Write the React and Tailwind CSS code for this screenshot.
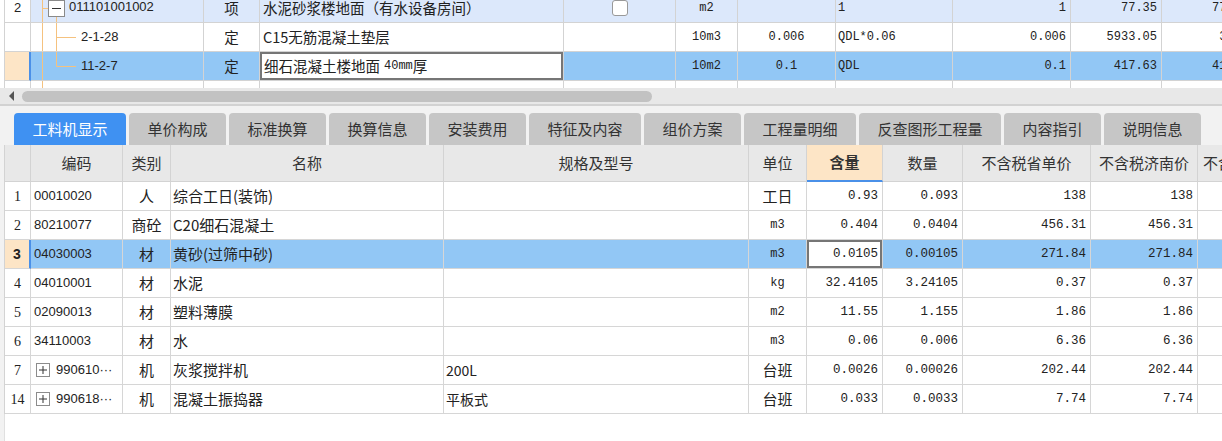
import React from 'react';

const CJK = "font-['Noto_Sans_CJK_SC','Noto_Sans',sans-serif]";
const MONO = "font-['Liberation_Mono','Noto_Sans_CJK_SC',monospace]";
const SANS = "font-['Liberation_Sans','Noto_Sans_CJK_SC',sans-serif]";

const topCols = 'grid-cols-[26px_173px_56px_304px_112px_62px_98px_117px_118px_91px_91px]';
const botCols = 'grid-cols-[26px_92px_48px_273px_305px_58px_76px_80px_128px_107px_107px]';

const Tree = ({ kind }) => {
    const c = '#f5c27f';
    if (kind === 'root') {
        return (
            <svg width="38" height="28" className="shrink-0">
                <line x1="11.5" y1="0" x2="11.5" y2="28" stroke={c} />
                <line x1="11.5" y1="14.5" x2="17" y2="14.5" stroke={c} />
                <line x1="25.5" y1="23" x2="25.5" y2="28" stroke={c} />
                <rect x="17.5" y="6.5" width="16" height="16" fill="#fff" stroke="#8a8a8a" />
                <line x1="21" y1="14.5" x2="30" y2="14.5" stroke="#333" />
            </svg>
        );
    }
    if (kind === 'mid' || kind === 'last') {
        return (
            <svg width="50" height="28" className="shrink-0">
                <line x1="11.5" y1="0" x2="11.5" y2="28" stroke={c} />
                <line x1="25.5" y1="0" x2="25.5" y2={kind === 'mid' ? 28 : 14.5} stroke={c} />
                <line x1="25.5" y1="14.5" x2="45" y2="14.5" stroke={c} />
            </svg>
        );
    }
    return (
        <svg width="50" height="28" className="shrink-0">
            <line x1="11.5" y1="0" x2="11.5" y2="28" stroke={c} />
        </svg>
    );
};

const PlusBox = () => (
    <svg width="14" height="14" className="shrink-0 ml-[2px] mr-[6px]">
        <rect x="0.5" y="0.5" width="13" height="13" fill="#fff" stroke="#8c8c8c" />
        <line x1="3" y1="7" x2="11" y2="7" stroke="#333" />
        <line x1="7" y1="3" x2="7" y2="11" stroke="#333" />
    </svg>
);

const TopTable = () => {
    const cell = 'border-r border-b border-[#d3d3d3] flex items-center h-[29px] overflow-hidden whitespace-nowrap';
    return (
        <div className="h-[88px] overflow-hidden bg-white">
            <div className={`-mt-[6px] ml-[4px] border-l border-[#d3d3d3] text-[#222] ${CJK}`}>
                {/* row 1 */}
                <div className={`grid ${topCols} bg-[#dce8fb]`}>
                    <div className={`${cell} bg-white justify-center text-[13px] ${SANS}`}>2</div>
                    <div className={`${cell} text-[13px] ${SANS}`}><Tree kind="root" /><span className="-mt-[2px]">011101001002</span></div>
                    <div className={`${cell} justify-center text-[14.5px]`}>项</div>
                    <div className={`${cell} pl-[3px] text-[14.5px]`}>水泥砂浆楼地面（有水设备房间）</div>
                    <div className={`${cell} justify-center`}><div className="w-[16px] h-[16px] rounded-[3px] border border-[#999] bg-white" /></div>
                    <div className={`${cell} justify-center text-[12px] ${MONO}`}>m2</div>
                    <div className={`${cell}`} />
                    <div className={`${cell} pl-[2px] text-[12px] ${MONO}`}>1</div>
                    <div className={`${cell} justify-end pr-[4px] text-[12px] ${MONO}`}>1</div>
                    <div className={`${cell} justify-end pr-[4px] text-[12px] ${MONO}`}>77.35</div>
                    <div className={`${cell} justify-end pr-[4px] text-[12px] ${MONO}`}>77.35</div>
                </div>
                {/* row 2 */}
                <div className={`grid ${topCols} bg-white`}>
                    <div className={`${cell}`} />
                    <div className={`${cell} text-[13px] ${SANS}`}><Tree kind="mid" /><span>2-1-28</span></div>
                    <div className={`${cell} justify-center text-[14.5px]`}>定</div>
                    <div className={`${cell} pl-[3px] text-[14.5px]`}>C15无筋混凝土垫层</div>
                    <div className={`${cell}`} />
                    <div className={`${cell} justify-center text-[12px] ${MONO}`}>10m3</div>
                    <div className={`${cell} justify-center text-[12px] ${MONO}`}>0.006</div>
                    <div className={`${cell} pl-[2px] text-[12px] ${MONO}`}>QDL*0.06</div>
                    <div className={`${cell} justify-end pr-[4px] text-[12px] ${MONO}`}>0.006</div>
                    <div className={`${cell} justify-end pr-[4px] text-[12px] ${MONO}`}>5933.05</div>
                    <div className={`${cell} justify-end pr-[4px] text-[12px] ${MONO}`}>35.6</div>
                </div>
                {/* row 3 selected */}
                <div className={`grid ${topCols} bg-[#92c7f5]`}>
                    <div className={`${cell} bg-[#fde5c6] border-r-2 border-r-[#4a90e8]`} />
                    <div className={`${cell} text-[13px] ${SANS}`}><Tree kind="last" /><span>11-2-7</span></div>
                    <div className={`${cell} justify-center text-[14.5px]`}>定</div>
                    <div className={`${cell} p-0`}>
                        <div className="w-full h-full bg-white border-2 border-[#767676] flex items-center pl-[2px] text-[14.5px]">
                            细石混凝土楼地面<span className={`ml-[4px] text-[12px] ${MONO}`}>40mm</span>厚
                        </div>
                    </div>
                    <div className={`${cell}`} />
                    <div className={`${cell} justify-center text-[12px] ${MONO}`}>10m2</div>
                    <div className={`${cell} justify-center text-[12px] ${MONO}`}>0.1</div>
                    <div className={`${cell} pl-[2px] text-[12px] ${MONO}`}>QDL</div>
                    <div className={`${cell} justify-end pr-[4px] text-[12px] ${MONO}`}>0.1</div>
                    <div className={`${cell} justify-end pr-[4px] text-[12px] ${MONO}`}>417.63</div>
                    <div className={`${cell} justify-end pr-[4px] text-[12px] ${MONO}`}>41.76</div>
                </div>
                {/* row 4, partly scrolled out */}
                <div className={`grid ${topCols} bg-white`}>
                    <div className={`${cell}`} />
                    <div className={`${cell} text-[13px] ${SANS}`}><Tree kind="cont" /><span>2-1-30</span></div>
                    <div className={`${cell} justify-center text-[14.5px]`}>定</div>
                    <div className={`${cell} pl-[3px] text-[14.5px]`}>一 混凝土找坡</div>
                    <div className={`${cell}`} />
                    <div className={`${cell}`} />
                    <div className={`${cell}`} />
                    <div className={`${cell}`} />
                    <div className={`${cell}`} />
                    <div className={`${cell}`} />
                    <div className={`${cell}`} />
                </div>
            </div>
        </div>
    );
};

const tabs = [
    ['工料机显示', 'w-[112px]'],
    ['单价构成', 'w-[97px]'],
    ['标准换算', 'w-[97px]'],
    ['换算信息', 'w-[97px]'],
    ['安装费用', 'w-[97px]'],
    ['特征及内容', 'w-[112px]'],
    ['组价方案', 'w-[97px]'],
    ['工程量明细', 'w-[112px]'],
    ['反查图形工程量', 'w-[142px]'],
    ['内容指引', 'w-[97px]'],
    ['说明信息', 'w-[97px]'],
];

const rows = [
    { n: '1', code: '00010020', type: '人', name: '综合工日(装饰)', spec: '', unit: '工日', hl: '0.93', sl: '0.093', p1: '138', p2: '138' },
    { n: '2', code: '80210077', type: '商砼', name: 'C20细石混凝土', spec: '', unit: 'm3', hl: '0.404', sl: '0.0404', p1: '456.31', p2: '456.31' },
    { n: '3', code: '04030003', type: '材', name: '黄砂(过筛中砂)', spec: '', unit: 'm3', hl: '0.0105', sl: '0.00105', p1: '271.84', p2: '271.84', sel: true },
    { n: '4', code: '04010001', type: '材', name: '水泥', spec: '', unit: 'kg', hl: '32.4105', sl: '3.24105', p1: '0.37', p2: '0.37' },
    { n: '5', code: '02090013', type: '材', name: '塑料薄膜', spec: '', unit: 'm2', hl: '11.55', sl: '1.155', p1: '1.86', p2: '1.86' },
    { n: '6', code: '34110003', type: '材', name: '水', spec: '', unit: 'm3', hl: '0.06', sl: '0.006', p1: '6.36', p2: '6.36' },
    { n: '7', code: '990610···', plus: true, type: '机', name: '灰浆搅拌机', spec: '200L', unit: '台班', hl: '0.0026', sl: '0.00026', p1: '202.44', p2: '202.44' },
    { n: '14', code: '990618···', plus: true, type: '机', name: '混凝土振捣器', spec: '平板式', unit: '台班', hl: '0.033', sl: '0.0033', p1: '7.74', p2: '7.74' },
];

const BottomTable = () => {
    const hcell = 'border-r border-b border-[#d3d3d3] flex items-center justify-center h-[37px] text-[15px] text-[#333] whitespace-nowrap overflow-hidden';
    const cell = 'border-r border-b border-[#d6d6d6] flex items-center h-[29px] whitespace-nowrap overflow-hidden';
    const isCjkUnit = (u) => u === '工日' || u === '台班';
    return (
        <div className={`ml-[4px] border-l border-[#d3d3d3] ${CJK} text-[#222]`}>
            <div className={`grid ${botCols} bg-[#e8e8e8]`}>
                <div className={hcell} />
                <div className={hcell}>编码</div>
                <div className={hcell}>类别</div>
                <div className={hcell}>名称</div>
                <div className={hcell}>规格及型号</div>
                <div className={hcell}>单位</div>
                <div className={`${hcell} bg-[#fde5c6] font-bold text-[#222] border-b-2 border-b-[#4a90e8]`}>含量</div>
                <div className={hcell}>数量</div>
                <div className={hcell}>不含税省单价</div>
                <div className={hcell}>不含税济南价</div>
                <div className={`${hcell} justify-start pl-[5px]`}>不含税市场价</div>
            </div>
            {rows.map((r) => (
                <div key={r.n} className={`grid ${botCols} ${r.sel ? 'bg-[#92c7f5]' : 'bg-white'}`}>
                    <div className={`${cell} justify-center ${r.sel ? "bg-[#fde5c6] border-r-2 border-r-[#4a90e8] font-bold font-['Liberation_Sans',sans-serif] text-[14px]" : "font-['Liberation_Serif',serif] text-[14px]"}`}>{r.n}</div>
                    <div className={`${cell} pl-[3px] text-[13px] ${SANS}`}>
                        {r.plus && <PlusBox />}
                        {r.code}
                    </div>
                    <div className={`${cell} justify-center text-[15px]`}>{r.type}</div>
                    <div className={`${cell} pl-[2px] text-[15px]`}>{r.name}</div>
                    <div className={`${cell} pl-[2px] text-[14px]`}>{r.spec}</div>
                    <div className={`${cell} justify-center ${isCjkUnit(r.unit) ? 'text-[15px]' : `text-[12px] ${MONO}`}`}>{r.unit}</div>
                    <div className={`${cell} ${r.sel ? 'p-0' : 'justify-end pr-[4px]'} text-[12.5px] ${MONO}`}>
                        {r.sel ? (
                            <div className="w-full h-full bg-white border-2 border-[#767676] flex items-center justify-end pr-[2px]">{r.hl}</div>
                        ) : r.hl}
                    </div>
                    <div className={`${cell} justify-end pr-[4px] text-[12.5px] ${MONO}`}>{r.sl}</div>
                    <div className={`${cell} justify-end pr-[4px] text-[12.5px] ${MONO}`}>{r.p1}</div>
                    <div className={`${cell} justify-end pr-[4px] text-[12.5px] ${MONO}`}>{r.p2}</div>
                    <div className={cell} />
                </div>
            ))}
        </div>
    );
};

export default function App() {
    return (
        <div className={`w-[1222px] h-[441px] overflow-hidden bg-[#f2f2f2] ${CJK}`}>
            <TopTable />
            {/* horizontal scrollbar */}
            <div className="h-[16px] bg-[#e8e8e8] flex items-center">
                <div className="w-[22px] flex justify-center">
                    <div className="w-0 h-0 border-y-[5px] border-y-transparent border-r-[5px] border-r-[#555]" />
                </div>
                <div className="w-[630px] h-[11px] rounded-full bg-[#c2c2c2]" />
            </div>
            <div className="h-[2px] bg-[#d2d2d2]" />
            {/* tabs */}
            <div className="flex gap-[3px] pl-[14px] pt-[7px]">
                {tabs.map(([t, w], i) => (
                    <div
                        key={t}
                        className={`${w} h-[32px] rounded-t-[4px] flex items-center justify-center text-[15px] ${i === 0 ? 'bg-[#3f91f2] text-white' : 'bg-[#c6c6c6] text-[#333]'}`}
                    >
                        {t}
                    </div>
                ))}
            </div>
            <BottomTable />
            <div className="ml-[4px] border-l border-[#e0e0e0] bg-white h-[40px]" />
        </div>
    );
}
